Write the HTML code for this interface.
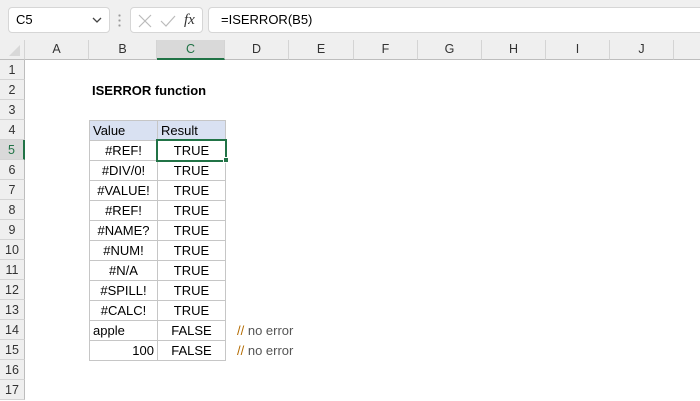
<!DOCTYPE html>
<html><head><style>
body{margin:0;width:700px;height:400px;overflow:hidden;background:#fff;font-family:"Liberation Sans",sans-serif;position:relative}
div{position:absolute;box-sizing:border-box}
.bar{left:0;top:0;width:700px;height:40px;background:#f0f0f0}
.box{background:#fff;border:1px solid #d6d6d6;border-radius:4px;top:7px;height:26px;font-size:13px;line-height:24px;color:#000}
.ch{top:40px;height:20px;background:#efefef;border-right:1px solid #d4d4d4;border-bottom:1px solid #bdbdbd;font-size:12.5px;text-align:center;line-height:19px;color:#333}
.rh{left:0;width:25px;height:20px;background:#efefef;border-right:1px solid #bdbdbd;border-bottom:1px solid #d4d4d4;font-size:12.5px;text-align:center;line-height:21px;color:#333}
.c{height:21px;border:1px solid #c6c6c6;font-size:13px;line-height:20px;padding:0 3px;color:#000}
.t{font-size:13px;line-height:21px;height:20px}
</style></head><body>
<div class="bar"></div>
<div class="box" style="left:8px;width:102px;padding-left:7px">C5<svg style="position:absolute;right:7px;top:9px" width="10" height="7"><path d="M1 1 L5 5 L9 1" stroke="#444" stroke-width="1.3" fill="none"/></svg></div>
<div style="left:118px;top:13px;width:3px;height:14px;background:radial-gradient(circle,#999 1px,transparent 1.2px) 0 0/3px 5px"></div>
<div class="box" style="left:130px;width:73px"><svg style="position:absolute;left:6px;top:5px" width="40" height="16"><path d="M2 2L14 14M14 2L2 14" stroke="#bbb" stroke-width="1.2"/><path d="M24 8L29 13L38 3" stroke="#bbb" stroke-width="1.2" fill="none"/></svg><span style="position:absolute;left:53px;top:0;font-family:'Liberation Serif',serif;font-style:italic;font-size:15px;color:#333">fx</span></div>
<div class="box" style="left:208px;width:500px;padding-left:12px">=ISERROR(B5)</div>
<div class="ch" style="left:0;width:25px;background:#efefef"><svg width="20" height="18" style="position:absolute;left:3px;top:0"><path d="M17 5L17 16L6 16Z" fill="#d8d8d8"/></svg></div>
<div class="ch" style="left:25px;width:64px">A</div>
<div class="ch" style="left:89px;width:68px">B</div>
<div class="ch" style="left:157px;width:68px;background:#d9d9d9;border-bottom:2px solid #217346;color:#217346">C</div>
<div class="ch" style="left:225px;width:64px">D</div>
<div class="ch" style="left:289px;width:65px">E</div>
<div class="ch" style="left:354px;width:64px">F</div>
<div class="ch" style="left:418px;width:64px">G</div>
<div class="ch" style="left:482px;width:64px">H</div>
<div class="ch" style="left:546px;width:64px">I</div>
<div class="ch" style="left:610px;width:64px">J</div>
<div class="ch" style="left:674px;width:40px"></div>
<div class="rh" style="top:60px">1</div><div class="rh" style="top:80px">2</div><div class="rh" style="top:100px">3</div><div class="rh" style="top:120px">4</div>
<div class="rh" style="top:140px;background:#d9d9d9;color:#217346;border-right:2px solid #217346">5</div>
<div class="rh" style="top:160px">6</div><div class="rh" style="top:180px">7</div><div class="rh" style="top:200px">8</div><div class="rh" style="top:220px">9</div><div class="rh" style="top:240px">10</div><div class="rh" style="top:260px">11</div><div class="rh" style="top:280px">12</div><div class="rh" style="top:300px">13</div><div class="rh" style="top:320px">14</div><div class="rh" style="top:340px">15</div><div class="rh" style="top:360px">16</div><div class="rh" style="top:380px">17</div>
<div class="t" style="left:92px;top:80px;font-weight:bold">ISERROR function</div>
<div class="c" style="left:89px;top:120px;width:69px;background:#d9e1f2">Value</div>
<div class="c" style="left:157px;top:120px;width:69px;background:#d9e1f2">Result</div>
<div class="c" style="left:89px;top:140px;width:69px;text-align:center">#REF!</div><div class="c" style="left:157px;top:140px;width:69px;text-align:center">TRUE</div>
<div class="c" style="left:89px;top:160px;width:69px;text-align:center">#DIV/0!</div><div class="c" style="left:157px;top:160px;width:69px;text-align:center">TRUE</div>
<div class="c" style="left:89px;top:180px;width:69px;text-align:center">#VALUE!</div><div class="c" style="left:157px;top:180px;width:69px;text-align:center">TRUE</div>
<div class="c" style="left:89px;top:200px;width:69px;text-align:center">#REF!</div><div class="c" style="left:157px;top:200px;width:69px;text-align:center">TRUE</div>
<div class="c" style="left:89px;top:220px;width:69px;text-align:center">#NAME?</div><div class="c" style="left:157px;top:220px;width:69px;text-align:center">TRUE</div>
<div class="c" style="left:89px;top:240px;width:69px;text-align:center">#NUM!</div><div class="c" style="left:157px;top:240px;width:69px;text-align:center">TRUE</div>
<div class="c" style="left:89px;top:260px;width:69px;text-align:center">#N/A</div><div class="c" style="left:157px;top:260px;width:69px;text-align:center">TRUE</div>
<div class="c" style="left:89px;top:280px;width:69px;text-align:center">#SPILL!</div><div class="c" style="left:157px;top:280px;width:69px;text-align:center">TRUE</div>
<div class="c" style="left:89px;top:300px;width:69px;text-align:center">#CALC!</div><div class="c" style="left:157px;top:300px;width:69px;text-align:center">TRUE</div>
<div class="c" style="left:89px;top:320px;width:69px">apple</div><div class="c" style="left:157px;top:320px;width:69px;text-align:center">FALSE</div>
<div class="c" style="left:89px;top:340px;width:69px;text-align:right">100</div><div class="c" style="left:157px;top:340px;width:69px;text-align:center">FALSE</div>
<div style="left:156px;top:139px;width:71px;height:23px;border:2px solid #217346"></div>
<div style="left:223px;top:157px;width:6px;height:6px;background:#217346;border:1px solid #fff"></div>
<div class="t" style="left:237px;top:320px;color:#555"><span style="color:#b36b00">//</span> no error</div>
<div class="t" style="left:237px;top:340px;color:#555"><span style="color:#b36b00">//</span> no error</div>
</body></html>
